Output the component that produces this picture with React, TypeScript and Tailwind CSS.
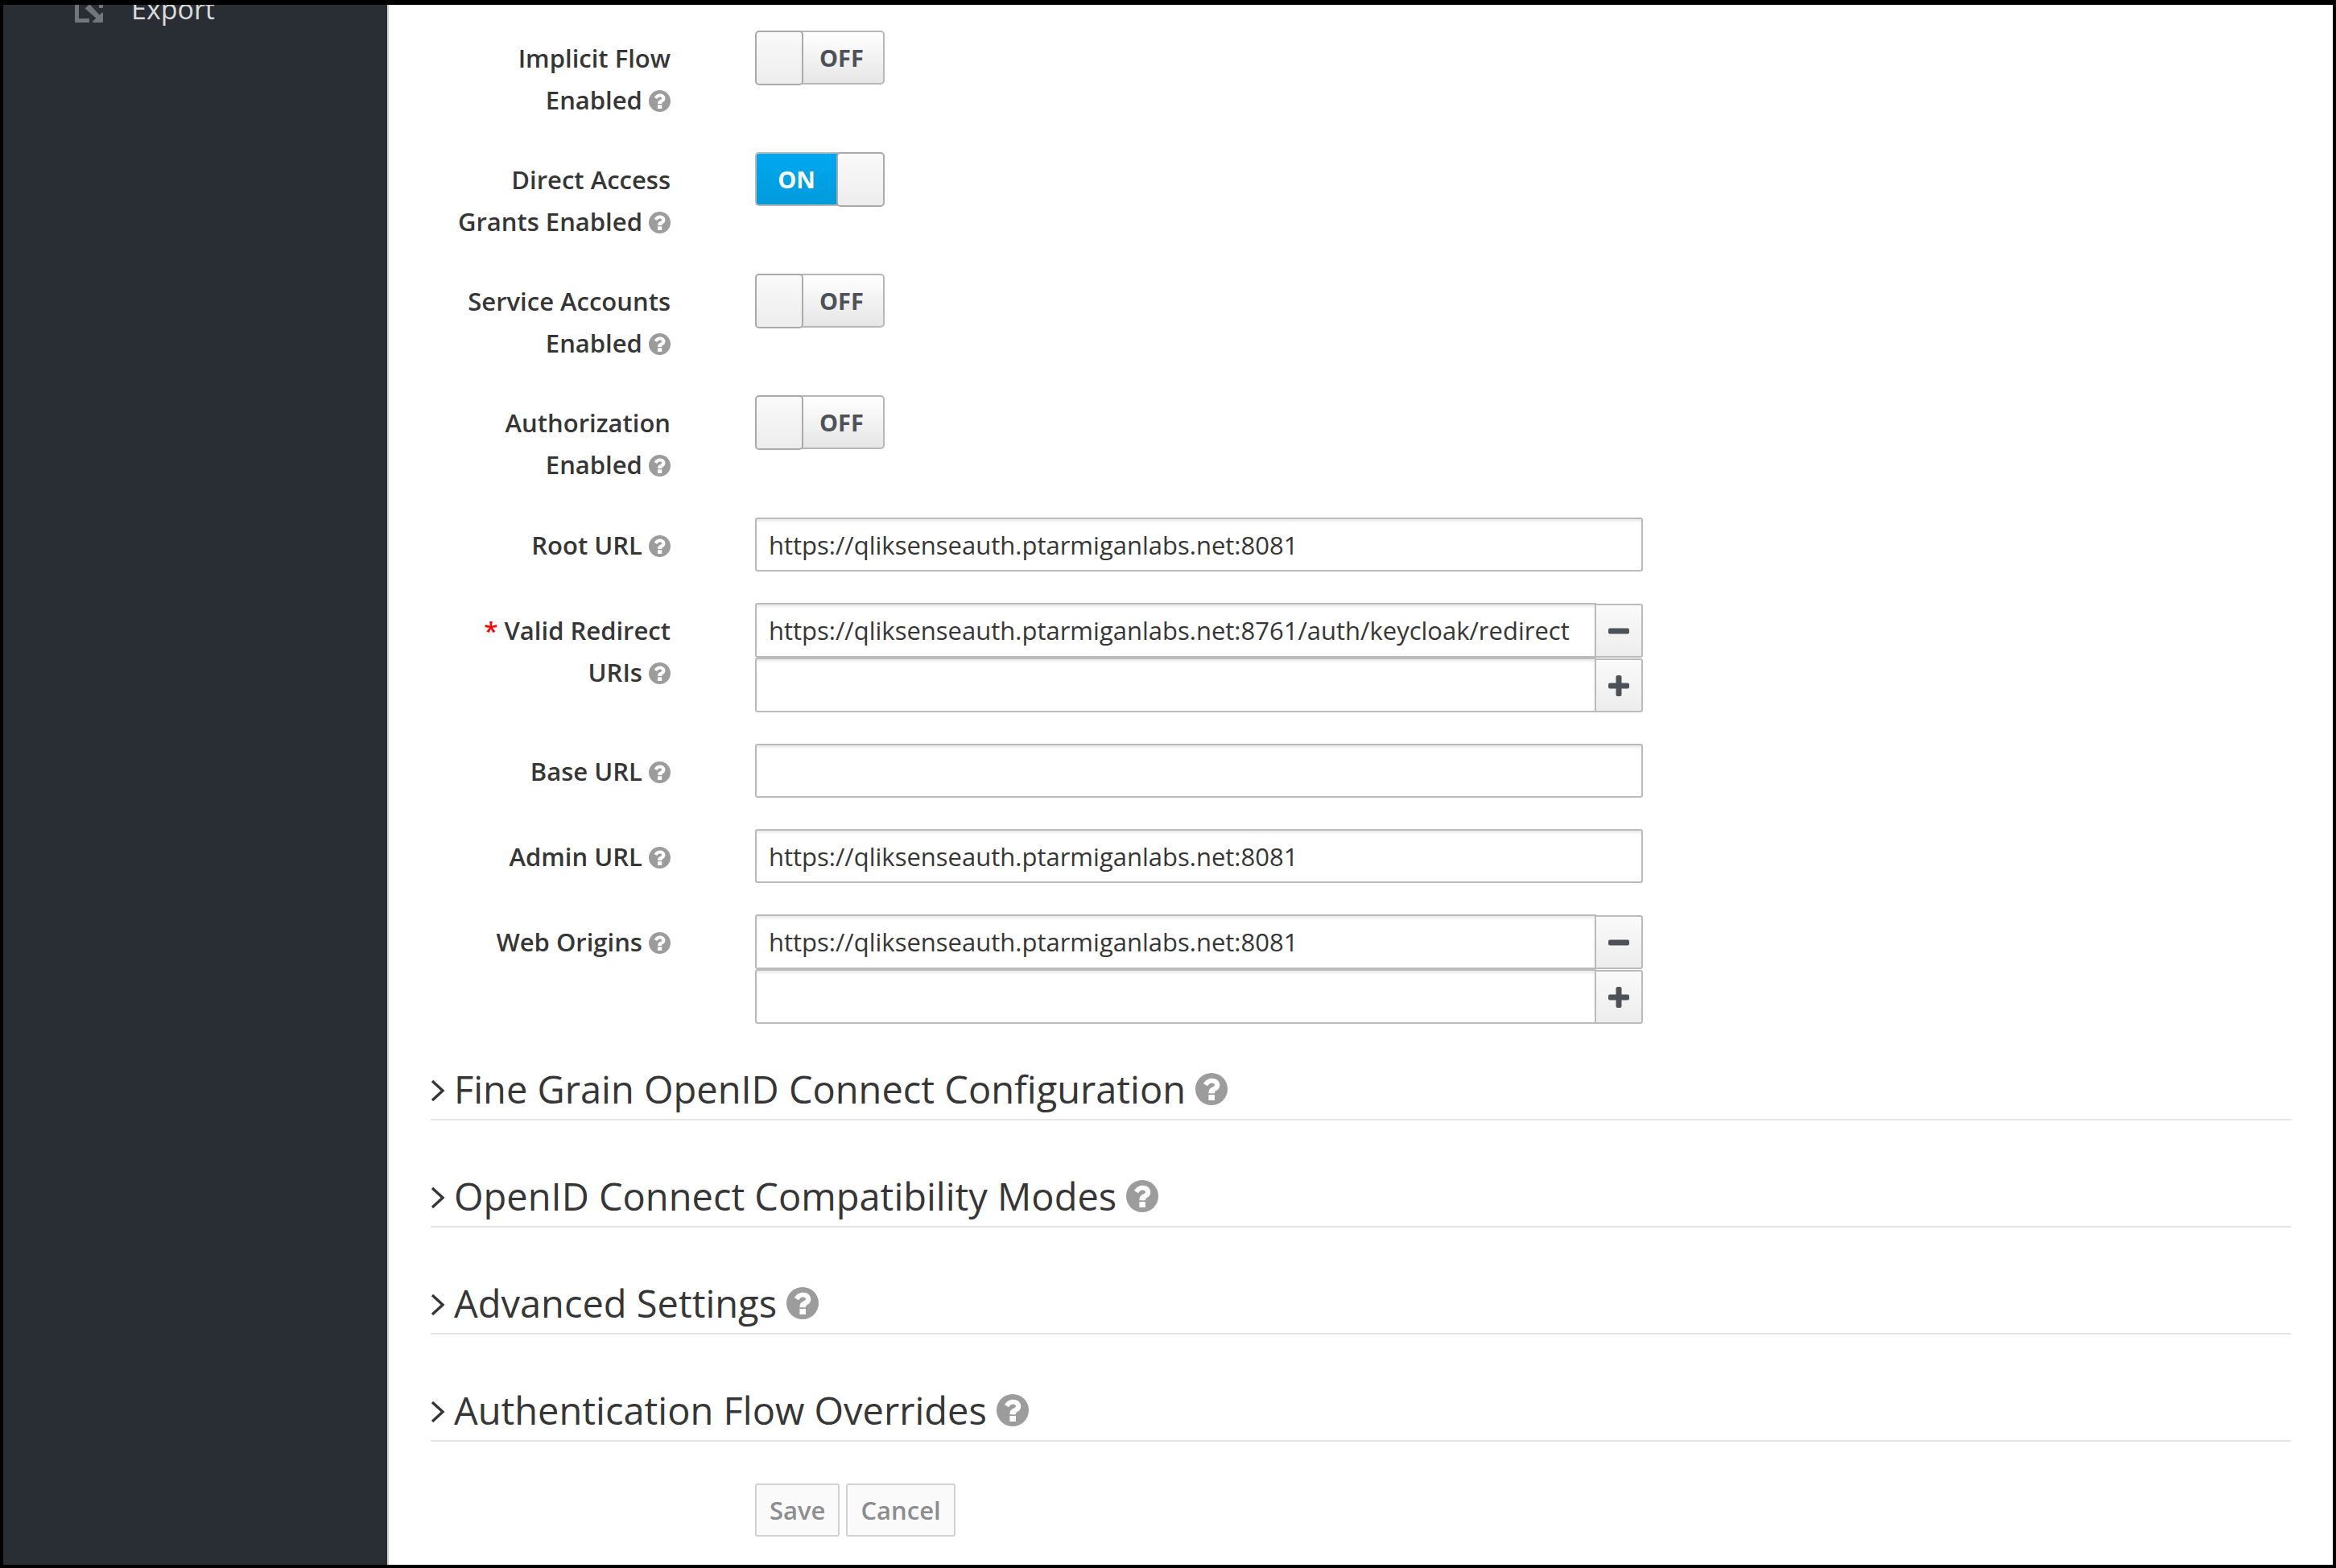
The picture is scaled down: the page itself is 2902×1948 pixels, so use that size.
import React from "react";

function HelpIcon({ large = false }: { large?: boolean }) {
  return (
    <svg
      viewBox="0 0 40 40"
      className={large ? "size-10 shrink-0" : "inline-block size-[27px] align-[-3px]"}
      aria-hidden="true"
    >
      <circle cx="20" cy="20" r="20" fill="#9c9c9c" />
      <path
        fill="#fff"
        d="M10 13.200C12.400 9 16 6.700 20.600 6.700c5.400 0 9.700 3.500 9.700 8.300 0 3.800-2.100 5.700-4.500 7.100-1.400.8-1.800 1.600-1.800 3.200h-7.600c0-3.900 1-5.900 4-7.300 2.400-1.100 3.600-1.700 3.600-3 0-1.500-1.600-2.500-3.600-2.500-2.400 0-3.600 1.400-5.400 3.800zM16.400 26.900h7.600V34h-7.600z"
      />
    </svg>
  );
}

function Sign({ plus }: { plus: boolean }) {
  return (
    <svg viewBox="0 0 26 26" className="size-[26px]" fill="#4d5258" aria-hidden="true">
      <rect x="0" y="9.500" width="26" height="7" rx="2" />
      {plus && <rect x="9.500" y="0" width="7" height="26" rx="2" />}
    </svg>
  );
}

type RowProps = {
  id: string;
  label: React.ReactNode;
  children: React.ReactNode;
};

function Row({ id, label, children }: RowProps) {
  return (
    <div className="flex">
      <label
        htmlFor={id}
        className="mr-[105px] w-[298px] shrink-0 pt-2 text-right text-[31px] leading-[52px] font-semibold"
      >
        {label} <HelpIcon />
      </label>
      {children}
    </div>
  );
}

function Toggle({ id, on = false }: { id: string; on?: boolean }) {
  const knob = (
    <span className="z-10 h-[68px] w-[60px] shrink-0 rounded-[5px] border-2 border-[#aaa] bg-linear-to-b from-[#fafafa] to-[#ededed]" />
  );
  return (
    <label className="flex h-[68px] w-[161px] cursor-pointer items-start">
      <input id={id} type="checkbox" defaultChecked={on} className="sr-only" />
      {on ? (
        <>
          <span className="-mr-1 flex h-[67px] flex-1 items-center justify-center rounded-l-[5px] border-2 border-r-0 border-[#b7b7b7] bg-linear-to-b from-[#00a8f0] to-[#009bdb] pr-1 text-[29px] font-bold text-white">
            ON
          </span>
          {knob}
        </>
      ) : (
        <>
          {knob}
          <span className="-ml-1 flex h-[67px] flex-1 items-center justify-center rounded-r-[5px] border-2 border-l-0 border-[#b7b7b7] bg-linear-to-b from-white to-[#e6e6e6] text-[29px] font-bold text-[#4d5258]">
            OFF
          </span>
        </>
      )}
    </label>
  );
}

const inputClass =
  "w-full min-w-0 flex-1 border-2 border-[#bbb] bg-white px-[15px] text-[31px] shadow-[inset_0_3px_3px_rgba(3,3,3,0.08)] outline-none";

function TextField({ id, value = "" }: { id: string; value?: string }) {
  return (
    <div className="flex w-[1103px]">
      <input id={id} type="text" defaultValue={value} className={inputClass + " h-[67px] rounded-[3px]"} />
    </div>
  );
}

function MultiField({ id, value }: { id: string; value: string }) {
  return (
    <div className="flex w-[1103px] flex-col">
      {[value, ""].map((text, i) => (
        <div key={i} className="flex items-end">
          <input
            id={i === 0 ? id : id + "-new"}
            aria-label={i === 0 ? undefined : "New value"}
            type="text"
            defaultValue={text}
            className={inputClass + " h-[68px] rounded-l-[3px]"}
          />
          <button
            type="button"
            aria-label={i === 0 ? "Remove" : "Add"}
            className="-ml-[2px] flex h-[67px] w-[60px] items-center justify-center rounded-r-[3px] border-2 border-[#bbb] bg-linear-to-b from-[#fafafa] to-[#ededed]"
          >
            <Sign plus={i === 1} />
          </button>
        </div>
      ))}
    </div>
  );
}

function Section({ title }: { title: string }) {
  return (
    <h2 className="border-b-2 border-[#e4e4e4]">
      <button type="button" className="flex h-[74px] items-center text-[47px] leading-[74px]">
        <svg viewBox="0 0 18 28" className="mt-1 mr-[11px] h-7 w-[18px]" fill="none" stroke="#363636" strokeWidth="3.400" aria-hidden="true">
          <path d="M2 2l13 12L2 26" />
        </svg>
        <span className="mr-3">{title}</span>
        <HelpIcon large />
      </button>
    </h2>
  );
}

export default function App() {
  return (
    <div className="flex min-h-screen border-4 border-t-[6px] border-black bg-white font-['Open_Sans',sans-serif] text-[#363636]">
      <nav className="w-[479px] shrink-0 overflow-hidden border-r-2 border-[#d1d1d1] bg-[#292e34]">
        <a href="#export" className="-mt-[22px] flex h-[54px] items-center pl-[89px] text-[34px] text-[#dbdada]">
          <svg viewBox="0 0 36 36" className="mr-[34px] size-9" fill="#72767b" aria-hidden="true">
            <path d="M1 0h14v5H5v25h12q1 0 1 1v3q0 1-1 1H1q-1 0-1-1V1q0-1 1-1zM12.500 17.500l5-4.500q1-.5 2 .5L30.500 25.500l3.500-3q1 0 1 1V34q0 1-1 1H22.500q-.8-1 0-1.800L26.300 29.500zM30 0h5v16q0 1-1 1h-3q-1 0-1-1z" />
          </svg>
          Export
        </a>
      </nav>
      <main className="flex-1 px-[52px]">
        <form className="pt-8">
          <div className="flex flex-col gap-[39px]">
            <Row id="implicit" label="Implicit Flow Enabled"><Toggle id="implicit" /></Row>
            <Row id="direct" label="Direct Access Grants Enabled"><Toggle id="direct" on /></Row>
            <Row id="service" label="Service Accounts Enabled"><Toggle id="service" /></Row>
            <Row id="authz" label="Authorization Enabled"><Toggle id="authz" /></Row>
          </div>
          <div className="mt-10 flex flex-col gap-[39px]">
            <Row id="root-url" label="Root URL">
              <TextField id="root-url" value="https://qliksenseauth.ptarmiganlabs.net:8081" />
            </Row>
            <Row id="redirect" label={<><span className="text-[#f00]">*</span> Valid Redirect URIs</>}>
              <MultiField id="redirect" value="https://qliksenseauth.ptarmiganlabs.net:8761/auth/keycloak/redirect" />
            </Row>
            <Row id="base-url" label="Base URL"><TextField id="base-url" /></Row>
            <Row id="admin-url" label="Admin URL">
              <TextField id="admin-url" value="https://qliksenseauth.ptarmiganlabs.net:8081" />
            </Row>
            <Row id="origins" label="Web Origins">
              <MultiField id="origins" value="https://qliksenseauth.ptarmiganlabs.net:8081" />
            </Row>
          </div>
          <div className="mt-11 flex flex-col gap-[57px]">
            <Section title="Fine Grain OpenID Connect Configuration" />
            <Section title="OpenID Connect Compatibility Modes" />
            <Section title="Advanced Settings" />
            <Section title="Authentication Flow Overrides" />
          </div>
          <div className="mt-[52px] ml-[403px] flex gap-2">
            {["Save", "Cancel"].map((t) => (
              <button key={t} type="button" disabled className="h-[66px] rounded-[3px] border-2 border-[#d1d1d1] bg-[#fafafa] px-4 text-[31px] font-semibold text-[#8b8d8f]">
                {t}
              </button>
            ))}
          </div>
        </form>
      </main>
    </div>
  );
}
